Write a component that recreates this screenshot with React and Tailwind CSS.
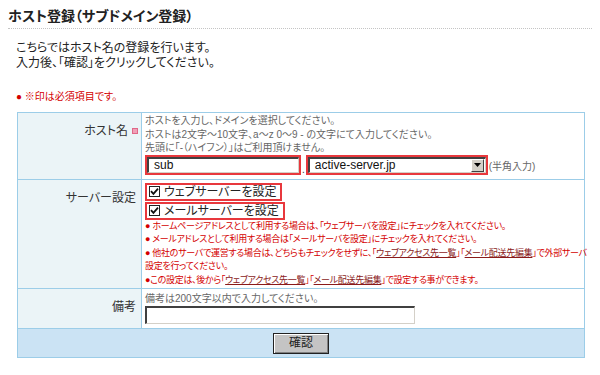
import React from "react";

const jp = "font-['Liberation_Sans','Noto_Sans_CJK_JP',sans-serif] [font-feature-settings:'palt']";

function RedBox({ className = "", children }) {
  return (
    <div className={`inline-flex border-2 border-[#e8383d] ${className}`}>
      {children}
    </div>
  );
}

function Check({ label }) {
  return (
    <RedBox className="items-center h-[18px] pl-[2px] pr-[4px]">
      <span className="flex items-center justify-center w-[11px] h-[11px] border border-[#222] bg-white mr-[4px]">
        <svg width="9" height="9" viewBox="0 0 9 9">
          <path d="M1 4.2 L3.4 6.8 L8 1.6" stroke="#111" strokeWidth="1.8" fill="none" />
        </svg>
      </span>
      <span className="text-[12px] leading-none text-[#222]">{label}</span>
    </RedBox>
  );
}

function Note({ children }) {
  return (
    <div className="text-[9px] leading-[13.5px] tracking-[-0.3px] text-[#d40000] whitespace-nowrap">
      {children}
    </div>
  );
}

function A({ children }) {
  return <span className="underline text-[#8a1a1a]">{children}</span>;
}

export default function App() {
  return (
    <div className={`w-[600px] h-[375px] bg-white text-[#333] ${jp}`}>
      <div className="px-2 pt-[8px]">
        <h1 className="text-[14px] leading-[17px] font-bold text-[#222] pb-[3px] border-b border-dotted border-[#c4c4c4]">
          ホスト登録（サブドメイン登録）
        </h1>
      </div>
      <div className="pl-4 pt-[12px] text-[12px] leading-[15px] text-[#222]">
        <p>こちらではホスト名の登録を行います。</p>
        <p>入力後、「確認」をクリックしてください。</p>
      </div>
      <p className="pl-4 pt-[20px] text-[10px] leading-[12px] text-[#d40000]">
        ● ※印は必須項目です。
      </p>

      <table className="ml-[17px] mt-[9px] w-[568px] table-fixed border-collapse border border-[#9ccde8]">
        <colgroup>
          <col className="w-[124px]" />
          <col />
        </colgroup>
        <tbody>
          <tr>
            <th className="align-top text-right font-normal pt-[5px] pr-[3px] border border-[#9ccde8] bg-[#ebf4f7]">
              <span className="text-[12px] leading-[14px] text-[#333]">ホスト名</span>
              <span className="inline-block ml-[4px] w-[6px] h-[6px] bg-[#f0a0b8] border border-[#e06888] align-middle"></span>
            </th>
            <td className="align-top pl-[3px] pt-[1px] pb-[4px] border border-[#9ccde8]">
              <div className="text-[10px] leading-[13.5px] text-[#666]">
                <div>ホストを入力し、ドメインを選択してください。</div>
                <div>ホストは2文字〜10文字、a〜z 0〜9 - の文字にて入力してください。</div>
                <div>先頭に「-（ハイフン）」はご利用頂けません。</div>
              </div>
              <div className="flex items-end">
                <RedBox className="w-[156px] h-[20px]">
                  <div className="flex-1 flex items-center bg-white border-t-2 border-l-2 border-[#404040] border-b border-r border-b-[#d4d0c8] border-r-[#d4d0c8] pl-[5px] text-[12px] text-[#111]">
                    sub
                  </div>
                </RedBox>
                <span className="px-[1px] text-[10px] leading-[10px] text-[#333]">.</span>
                <RedBox className="w-[182px] h-[20px]">
                  <div className="flex-1 flex items-center bg-white border-t-2 border-l-2 border-[#404040] border-b border-r border-b-[#d4d0c8] border-r-[#d4d0c8]">
                    <span className="flex-1 pl-[5px] text-[12px] text-[#111]">active-server.jp</span>
                    <span className="flex items-center justify-center w-[13px] h-[13px] mr-[1px] bg-[#d4d0c8] border border-t-white border-l-white border-b-[#404040] border-r-[#404040]">
                      <svg width="7" height="4" viewBox="0 0 7 4">
                        <path d="M0 0 L7 0 L3.5 4 Z" fill="#000" />
                      </svg>
                    </span>
                  </div>
                </RedBox>
                <span className="ml-[1px] mb-[2px] text-[10px] leading-[12px] text-[#666]">(半角入力)</span>
              </div>
            </td>
          </tr>
          <tr>
            <th className="align-top text-right font-normal pt-[5px] pr-[5px] border border-[#9ccde8] bg-[#ebf4f7]">
              <span className="text-[12px] leading-[14px] text-[#333]">サーバー設定</span>
            </th>
            <td className="align-top pl-[3px] pt-[3px] pb-[1px] border border-[#9ccde8]">
              <div className="flex flex-col items-start gap-[1px]">
                <Check label="ウェブサーバーを設定" />
                <Check label="メールサーバーを設定" />
              </div>
              <div>
                <Note>● ホームページアドレスとして利用する場合は、「ウェブサーバを設定」にチェックを入れてください。</Note>
                <Note>● メールアドレスとして利用する場合は「メールサーバを設定」にチェックを入れてください。</Note>
                <Note>
                  ● 他社のサーバで運営する場合は、どちらもチェックをせずに、「<A>ウェブアクセス先一覧</A>」「<A>メール配送先編集</A>」で外部サーバ
                </Note>
                <Note>設定を行ってください。</Note>
                <Note>
                  ●この設定は、後から「<A>ウェブアクセス先一覧</A>」「<A>メール配送先編集</A>」で設定する事ができます。
                </Note>
              </div>
            </td>
          </tr>
          <tr>
            <th className="align-top text-right font-normal pt-[5px] pr-[5px] border border-[#9ccde8] bg-[#ebf4f7]">
              <span className="text-[12px] leading-[14px] text-[#333]">備考</span>
            </th>
            <td className="align-top pl-[3px] pt-[3px] pb-[4px] border border-[#9ccde8]">
              <div className="text-[10px] leading-[14px] text-[#666]">備考は200文字以内で入力してください。</div>
              <div className="w-[270px] h-[18px] bg-white border-t-2 border-l-2 border-[#404040] border-b border-r border-b-[#d4d0c8] border-r-[#d4d0c8]"></div>
            </td>
          </tr>
          <tr>
            <td colSpan={2} className="bg-[#cbe3f4] border border-[#9ccde8] h-[29px]">
              <div className="flex justify-center">
                <button className="w-[56px] h-[21px] bg-[#c4c4c4] border border-[#222] shadow-[inset_1px_1px_0_#fff,inset_-1px_-1px_0_#808080] text-[12px] leading-none text-[#222]">
                  確認
                </button>
              </div>
            </td>
          </tr>
        </tbody>
      </table>
    </div>
  );
}
